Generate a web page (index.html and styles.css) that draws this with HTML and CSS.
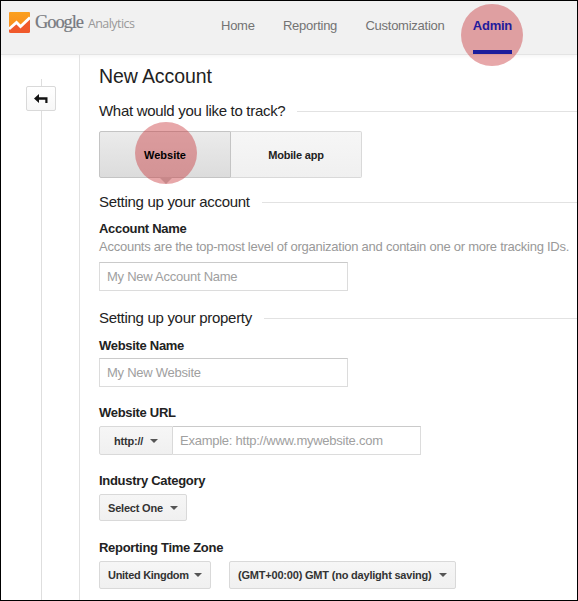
FILE: index.html
```html
<!DOCTYPE html>
<html lang="en">
<head>
  <meta charset="UTF-8" />
  <meta name="viewport" content="width=device-width, initial-scale=1.0" />
  <title>Google Analytics - New Account</title>
  <link rel="stylesheet" href="styles.css">
</head>
<body>

<header>
  <div class="logo">
    <svg width="21" height="21" viewBox="0 0 21 21">
      <defs>
        <linearGradient id="top" x1="0" y1="0" x2="0" y2="1">
          <stop offset="0" stop-color="#fba01e" />
          <stop offset="1" stop-color="#f98c1c" />
        </linearGradient>
      </defs>
      <rect width="21" height="21" rx="1.5" fill="#f0592b" />
      <path d="M0 15.5V1.5Q0 0 1.5 0H19.5Q21 0 21 1.5V6L13 15L8 10L2 16Z" fill="url(#top)" />
      <path d="M0 17L7.5 10.5L11.5 14.5L21 5.5" fill="none" stroke="#fff" stroke-width="2.8" />
    </svg>
    <span class="google">Google</span>
    <span class="analytics">Analytics</span>
  </div>
  <nav>
    <a>Home</a>
    <a>Reporting</a>
    <a>Customization</a>
    <a class="active"><span>Admin</span></a>
  </nav>
</header>

<div class="page">
  <aside>
    <button class="back">
      <svg width="14" height="10" viewBox="0 0 14 10">
        <path d="M0 4.5L5 0V3.3H13.5V9H11.3V5.7H5V9Z" fill="#111" />
      </svg>
    </button>
  </aside>

  <main>
    <h1>New Account</h1>

    <h2><span>What would you like to track?</span></h2>
    <div class="toggle">
      <button class="selected"><span>Website</span></button>
      <button><span>Mobile app</span></button>
    </div>

    <h2><span>Setting up your account</span></h2>
    <label>Account Name</label>
    <p>Accounts are the top-most level of organization and contain one or more tracking IDs.</p>
    <input type="text" placeholder="My New Account Name" />

    <h2 class="second"><span>Setting up your property</span></h2>
    <label>Website Name</label>
    <input type="text" placeholder="My New Website" />

    <label class="spaced">Website URL</label>
    <div class="url">
      <button class="select protocol">http://</button>
      <input type="text" placeholder="Example: http://www.mywebsite.com" />
    </div>

    <label class="spaced">Industry Category</label>
    <button class="select industry">Select One</button>

    <label class="spaced last">Reporting Time Zone</label>
    <div class="zone">
      <button class="select country">United Kingdom</button>
      <button class="select gmt">(GMT+00:00) GMT (no daylight saving)</button>
    </div>
  </main>
</div>

</body>
</html>
```
FILE: styles.css
```css
* {
  box-sizing: border-box;
}
body {
  margin: 0;
  width: 578px;
  height: 601px;
  border: 1px solid #000;
  background: #fff;
  color: #222;
  font-family: "Liberation Sans", Arial, sans-serif;
  font-size: 13px;
  letter-spacing: -0.25px;
  overflow: hidden;
}

/* Header */
header {
  display: flex;
  height: 54px;
  background: #f1f1f1;
  border-bottom: 1px solid #e4e4e4;
  box-shadow: 0 1px 4px rgba(0,0,0,0.05);
}
.logo {
  display: flex;
  width: 220px;
  height: 43px;
  padding-left: 8px;
  align-items: center;
}
.google {
  margin-left: 5px;
  font-family: "Liberation Serif", serif;
  font-size: 18.5px;
  letter-spacing: -1.1px;
  color: #777a80;
  -webkit-text-stroke: 0.2px #777a80;
}
.analytics {
  margin: 2px 0 0 5px;
  font-family: "Open Sans", sans-serif;
  font-size: 12.5px;
  letter-spacing: -0.55px;
  color: #999;
}
nav {
  display: flex;
  gap: 28.3px;
}
nav a {
  height: 53px;
  line-height: 50px;
  color: #737373;
}
nav .active {
  position: relative;
  font-weight: bold;
  color: #221a9c;
}
nav .active span {
  display: block;
  position: relative;
  z-index: 1;
  height: 53px;
  border-bottom: 4px solid #1d1d9c;
}

/* Round highlights */
nav .active::after,
.toggle .selected::after {
  content: "";
  position: absolute;
  left: 50%;
  width: 62px;
  height: 62px;
  margin-left: -31px;
  border-radius: 50%;
  background: rgba(200,50,55,0.43);
}
nav .active::after {
  top: 3px;
}

/* Sidebar */
.page {
  display: flex;
  height: 545px;
}
aside {
  flex: none;
  width: 79px;
  padding-top: 24px;
  border-right: 1px solid #e2e2e2;
  background: linear-gradient(#dedede, #dedede) 40px 24px / 1px 100% no-repeat;
}
button {
  padding: 0;
  border: 1px solid #d9d9d9;
  border-radius: 2px;
  background: linear-gradient(#f6f6f6, #f0f0f0);
  font: bold 11px "Liberation Sans", Arial, sans-serif;
  letter-spacing: -0.2px;
  white-space: nowrap;
  color: #333;
}
.back {
  display: flex;
  width: 30px;
  height: 25px;
  margin: 7px 0 0 25px;
  align-items: center;
  justify-content: center;
  background: linear-gradient(#fff, #f7f7f7);
}

/* Form */
main {
  flex: 1;
  min-width: 0;
  padding: 9px 0 0 19px;
}
h1 {
  margin: 0 0 13px;
  font-size: 19.5px;
  font-weight: normal;
  letter-spacing: -0.1px;
  line-height: 24px;
}
h2 {
  display: flex;
  align-items: center;
  margin: 14px 0 8px;
  font-size: 15px;
  font-weight: normal;
  letter-spacing: -0.3px;
  line-height: 20px;
}
h2::after {
  content: "";
  flex: 1;
  height: 1px;
  margin-left: 12px;
  background: #e2e2e2;
}
h1 + h2 {
  margin: 0 0 10px;
}
h2.second {
  margin: 17px 0 9px;
}
.toggle {
  display: flex;
}
.toggle button {
  width: 131px;
  height: 47px;
  border-left: 0;
  border-radius: 0 2px 2px 0;
  color: #222;
}
.toggle .selected {
  position: relative;
  width: 132px;
  border: 1px solid #c4c4c4;
  border-radius: 2px 0 0 2px;
  background: linear-gradient(#ebebeb, #dcdcdc);
  letter-spacing: 0;
  color: #000;
}
.toggle .selected::before {
  content: "";
  position: absolute;
  left: 59px;
  top: 45px;
  border: 7px solid transparent;
  border-top-color: #c8c8c8;
  border-bottom: 0;
}
.toggle .selected::after {
  left: 66px;
  top: -10px;
}
.toggle .selected span {
  position: relative;
  z-index: 1;
}
label {
  display: block;
  margin-bottom: 3px;
  font-weight: bold;
  letter-spacing: -0.3px;
  line-height: 18px;
}
label:has(+ p) {
  margin: 0;
}
.spaced {
  margin: 17px 0 4px;
}
.last {
  margin-top: 18px;
}
p {
  margin: 0 0 6px;
  line-height: 18px;
  color: #999;
  white-space: nowrap;
}
input {
  display: block;
  width: 249px;
  height: 29px;
  padding: 0 7px;
  border: 1px solid #dcdcdc;
  border-top-color: #cacaca;
  font: 13px "Liberation Sans", Arial, sans-serif;
  letter-spacing: -0.25px;
}
input::placeholder {
  color: #a0a0a0;
}
.url,
.zone {
  display: flex;
}
.url input {
  width: 248px;
  border-left: 0;
}
.select {
  display: flex;
  height: 28px;
  align-items: center;
  justify-content: space-between;
  padding: 0 8px;
}
.select::after {
  content: "";
  border: 4px solid transparent;
  border-top-color: #555;
  border-bottom: 0;
}
.protocol {
  width: 74px;
  height: 29px;
  padding: 0 14px;
  border-radius: 2px 0 0 2px;
}
.industry {
  width: 88px;
  height: 27px;
}
.country {
  width: 112px;
  letter-spacing: -0.3px;
}
.gmt {
  width: 227px;
  margin-left: 18px;
}
```
